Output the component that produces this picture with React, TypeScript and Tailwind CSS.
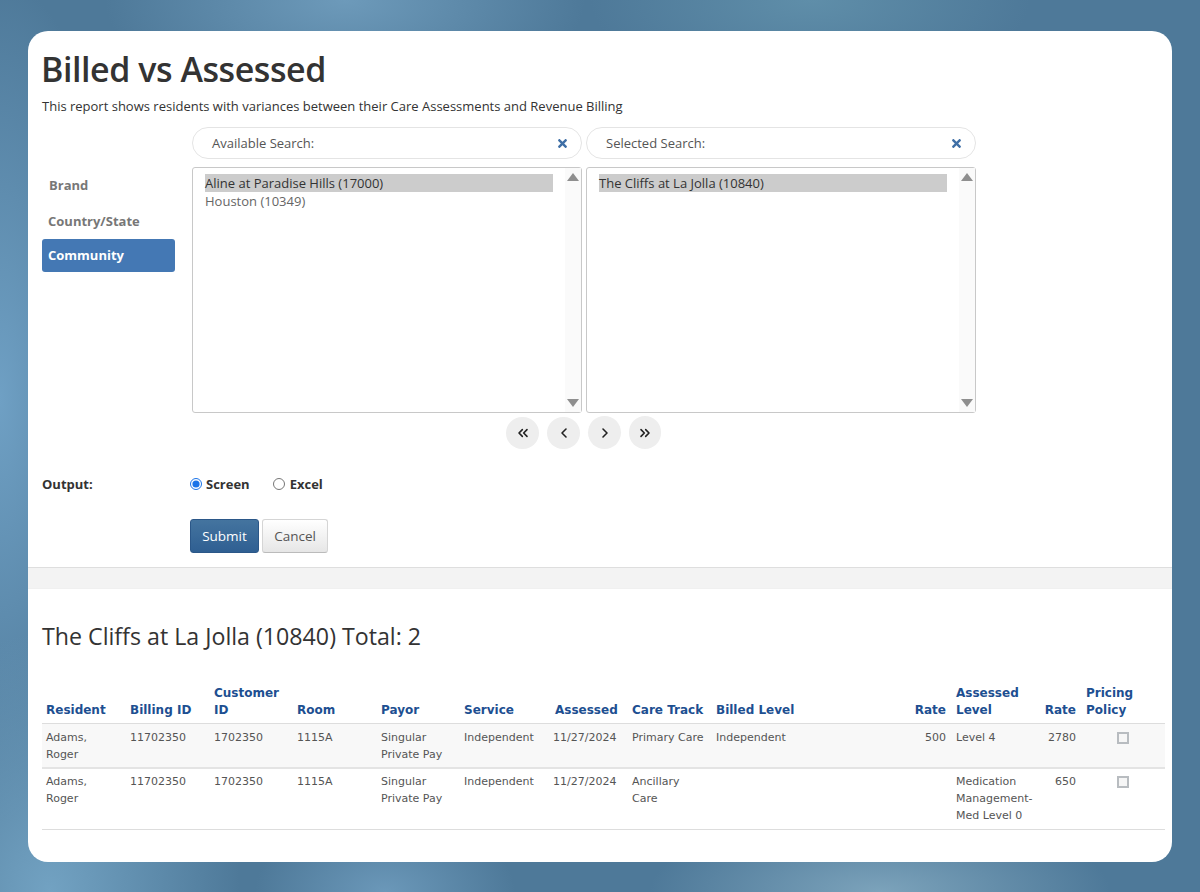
import React from 'react';
import { ChevronLeft, ChevronRight, ChevronsLeft, ChevronsRight } from 'lucide-react';
import { FaTimes } from 'react-icons/fa';

const rows = [
  { resident: 'Adams, Roger', billingId: '11702350', customerId: '1702350', room: '1115A', payor: 'Singular Private Pay', service: 'Independent', assessed: '11/27/2024', track: 'Primary Care', billed: 'Independent', rate: '500', level: 'Level 4', assessedRate: '2780' },
  { resident: 'Adams, Roger', billingId: '11702350', customerId: '1702350', room: '1115A', payor: 'Singular Private Pay', service: 'Independent', assessed: '11/27/2024', track: 'Ancillary Care', billed: '', rate: '', level: 'Medication Management-Med Level 0', assessedRate: '650' },
];

function SearchBox({ label }: { label: string }) {
  return (
    <div className="flex h-8 flex-1 items-center justify-between rounded-full border border-[#e4e4e4] pl-[19px] pr-[13px] text-[13px] text-[#555]">
      <span className="pt-[2px]">{label}</span>
      <FaTimes className="h-[13px] w-[11px] text-[#3f6fa6]" />
    </div>
  );
}

function ListBox({ items }: { items: string[] }) {
  return (
    <div className="flex h-[246px] flex-1 rounded-[3px] border border-[#c8c8c8] text-[13px] leading-[18px] text-[#666]">
      <div className="flex-1 pl-3 pr-3 pt-[6px]">
        {items.map((item, i) => (
          <div key={item} className={i === 0 ? 'bg-[#cccccc] text-[#333]' : ''}>{item}</div>
        ))}
      </div>
      <div className="flex w-4 flex-col items-center justify-between bg-[#fafafa] py-[5px]">
        <div className="h-0 w-0 border-x-[6px] border-b-[8px] border-x-transparent border-b-[#8f8f8f]" />
        <div className="h-0 w-0 border-x-[6px] border-t-[8px] border-x-transparent border-t-[#8f8f8f]" />
      </div>
    </div>
  );
}

export default function App() {
  return (
    <div className="min-h-[892px] bg-[#4e7999] bg-[radial-gradient(ellipse_240px_110px_at_345px_0px,#6d9aba,transparent),radial-gradient(ellipse_220px_90px_at_810px_0px,#5f8ea9,transparent),radial-gradient(ellipse_190px_260px_at_50px_892px,#72a2c2,transparent),radial-gradient(ellipse_130px_80px_at_385px_892px,#6b98b9,transparent),radial-gradient(ellipse_230px_80px_at_880px_892px,#7ca3bb,transparent),radial-gradient(ellipse_130px_420px_at_0px_400px,#6fa0c4,transparent)] px-7 pb-[30px] pt-[31px] font-['Open_Sans',sans-serif]">
      <div className="overflow-hidden rounded-[20px] bg-white">
        <section className="px-[14px] pt-[13px]">
          <h1 className="-ml-px text-[34px] font-semibold leading-[50px] tracking-[-0.45px] text-[#333]">Billed vs Assessed</h1>
          <p className="mt-[2px] text-[13px] leading-5 text-[#333]">This report shows residents with variances between their Care Assessments and Revenue Billing</p>

          <div className="mt-[11px] flex">
            <nav className="mt-[40px] flex w-[133px] flex-col text-[13px] font-bold text-[#777]">
              <a className="flex h-9 items-center pt-[2px] pl-[7px]">Brand</a>
              <a className="flex h-9 items-center pt-[2px] pl-[6px]">Country/State</a>
              <a className="flex h-[33px] items-center rounded-[3px] bg-[#4478b4] pl-[6px] text-white">Community</a>
            </nav>
            <div className="ml-[17px] w-[784px]">
              <div className="flex gap-1">
                <SearchBox label="Available Search:" />
                <SearchBox label="Selected Search:" />
              </div>
              <div className="mt-2 flex gap-1">
                <ListBox items={['Aline at Paradise Hills (17000)', 'Houston (10349)']} />
                <ListBox items={['The Cliffs at La Jolla (10840)']} />
              </div>
              <div className="mt-[3px] flex h-[34px] justify-center gap-2 pr-[1px] text-[#222]">
                <button className="mt-[1px] flex h-[32px] w-[33px] items-center justify-center rounded-full bg-[#eeeeee]"><ChevronsLeft className="h-4 w-4" strokeWidth={2.4} /></button>
                <button className="mt-[1px] flex h-[32px] w-[33px] items-center justify-center rounded-full bg-[#eeeeee]"><ChevronLeft className="h-4 w-4" strokeWidth={2.4} /></button>
                <button className="flex h-[33px] w-[33px] items-center justify-center rounded-full bg-[#eeeeee]"><ChevronRight className="h-4 w-4" strokeWidth={2.4} /></button>
                <button className="flex h-[33px] w-[32px] items-center justify-center rounded-full bg-[#eeeeee]"><ChevronsRight className="h-4 w-4" strokeWidth={2.4} /></button>
              </div>
            </div>
          </div>

          <div className="mt-[24px] flex items-center text-[13px] font-bold leading-5 text-[#333]">
            <span className="w-[148px]">Output:</span>
            <label className="flex items-center gap-[4px]">
              <input type="radio" name="output" defaultChecked className="m-0 h-3 w-3 accent-[#1a73e8]" />
              Screen
            </label>
            <label className="ml-[23px] flex items-center gap-[5px]">
              <input type="radio" name="output" className="m-0 h-3 w-3" />
              Excel
            </label>
          </div>

          <div className="ml-[148px] mt-[25px] flex gap-[3px] pb-[14px] text-[13.5px]">
            <button className="h-[34px] w-[69px] rounded-[3px] border border-[#2b5788] bg-gradient-to-b from-[#44749f] to-[#2f5f92] text-white">Submit</button>
            <button className="h-[34px] w-[66px] rounded-[3px] border border-[#d5d5d5] border-b-[#bbb] bg-gradient-to-b from-white to-[#e6e6e6] text-[#555]">Cancel</button>
          </div>
        </section>

        <div className="h-[22px] border-y border-t-[#dedede] border-b-[#f0f0f0] bg-[#f3f3f3]" />

        <section className="pl-[14px] pr-[7px] pb-[32px]">
          <h2 className="mt-[31px] text-[23.2px] font-normal leading-8 text-[#333]">The Cliffs at La Jolla (10840) Total: 2</h2>
          <table className="mt-[33px] w-full table-fixed border-collapse font-['DejaVu_Sans',sans-serif] text-[11px] leading-[17px] text-[#555]">
            <colgroup>
              <col className="w-[84px]" />
              <col className="w-[84px]" />
              <col className="w-[83px]" />
              <col className="w-[84px]" />
              <col className="w-[83px]" />
              <col className="w-[89px]" />
              <col className="w-[79px]" />
              <col className="w-[84px]" />
              <col className="w-[198px]" />
              <col className="w-[42px]" />
              <col className="w-[88px]" />
              <col className="w-[42px]" />
              <col />
            </colgroup>
            <thead className="text-[12px] font-bold text-[#1d4f91]">
              <tr className="border-b border-[#dddddd] align-bottom">
                <th className="px-1 pb-[4px] text-left">Resident</th>
                <th className="px-1 pb-[4px] text-left">Billing ID</th>
                <th className="px-1 pb-[4px] text-left">Customer ID</th>
                <th className="px-1 pb-[4px] text-left">Room</th>
                <th className="px-1 pb-[4px] text-left">Payor</th>
                <th className="px-1 pb-[4px] text-left">Service</th>
                <th className="pb-[4px] pl-[6px] pr-1 text-left">Assessed</th>
                <th className="px-1 pb-[4px] text-left">Care Track</th>
                <th className="px-1 pb-[4px] text-left">Billed Level</th>
                <th className="pb-[4px] pl-1 pr-[6px] text-right">Rate</th>
                <th className="px-1 pb-[4px] text-left">Assessed Level</th>
                <th className="pb-[4px] pl-1 pr-[6px] text-right">Rate</th>
                <th className="px-1 pb-[4px] text-left">Pricing Policy</th>
              </tr>
            </thead>
            <tbody>
              {rows.map((row, i) => {
                const cell = i === 0 ? 'px-1 pb-[4px] pt-[5px]' : 'px-1 pb-[5px] pt-[4px]';
                const num = i === 0 ? 'pb-[4px] pl-1 pr-[6px] pt-[5px] text-right' : 'pb-[5px] pl-1 pr-[6px] pt-[4px] text-right';
                return (
                  <tr key={row.track} className={i === 0 ? 'border-b-2 border-[#e4e4e4] bg-[#f8f8f8] align-top' : 'border-b border-[#dddddd] align-top'}>
                    <td className={cell}>{row.resident}</td>
                    <td className={cell}>{row.billingId}</td>
                    <td className={cell}>{row.customerId}</td>
                    <td className={cell}>{row.room}</td>
                    <td className={cell}>{row.payor}</td>
                    <td className={cell}>{row.service}</td>
                    <td className={cell}>{row.assessed}</td>
                    <td className={cell}>{row.track}</td>
                    <td className={cell}>{row.billed}</td>
                    <td className={num}>{row.rate}</td>
                    <td className={cell}>{row.level}</td>
                    <td className={num}>{row.assessedRate}</td>
                    <td className={i === 0 ? 'pb-[5px] pl-[35px] pt-[8px]' : 'pb-[5px] pl-[35px] pt-[7px]'}>
                      <div className="h-[12px] w-[12px] border-2 border-[#b8bcc0] bg-[#f6f6f6]" />
                    </td>
                  </tr>
                );
              })}
            </tbody>
          </table>
        </section>
      </div>
    </div>
  );
}
